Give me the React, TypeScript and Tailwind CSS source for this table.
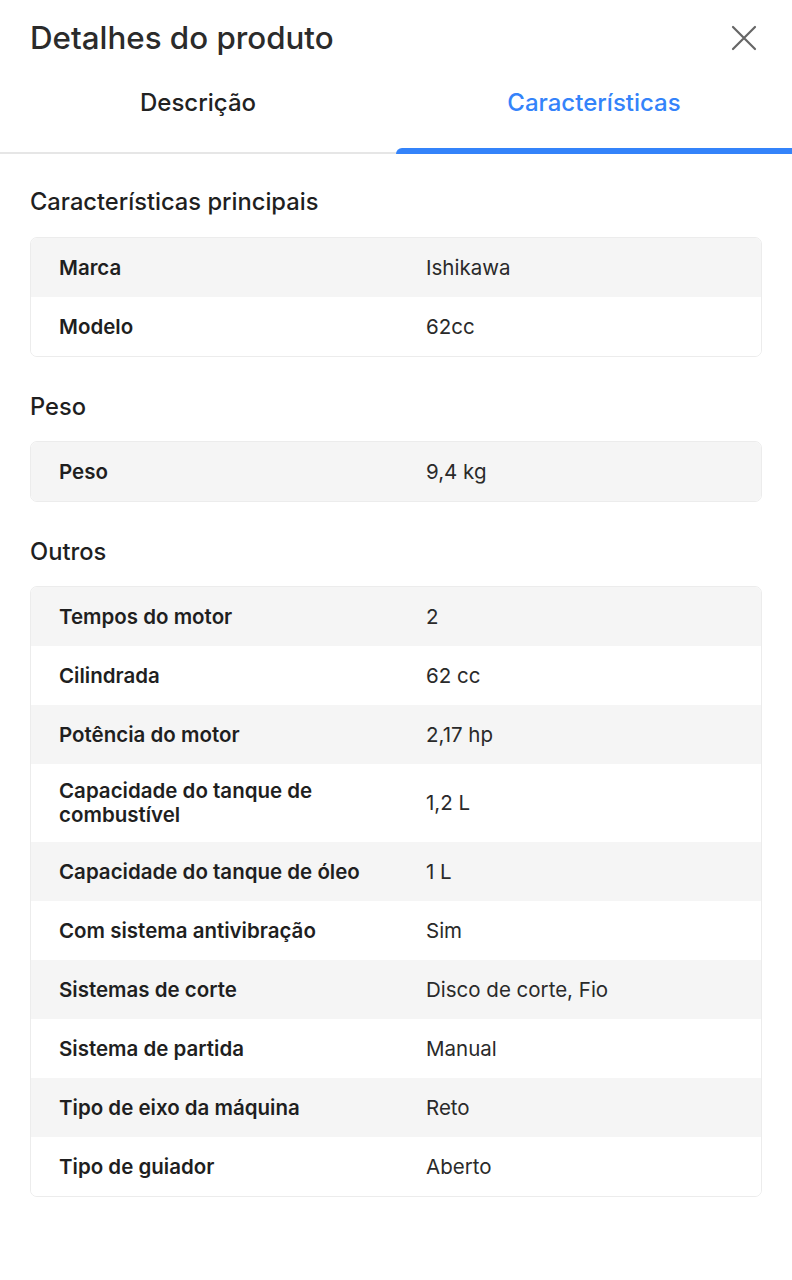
import React from "react";

type Row = [string, string];

const font = { fontFamily: '"Inter", "Open Sans", sans-serif' };

function Table({ rows }: { rows: Row[] }) {
  return (
    <div className="mx-[30px] rounded-[7px] border border-[#ececec] overflow-hidden">
      {rows.map(([k, v], i) => (
        <div
          key={k}
          className={`flex items-center min-h-[59px] py-[15px] ${i % 2 === 0 ? "bg-[#f5f5f5]" : "bg-white"}`}
        >
          <div className="w-[395px] pl-[28px] pr-[24px] text-[20.5px] leading-[24px] font-semibold text-[#1f1f1f]">{k}</div>
          <div className="flex-1 pr-[20px] text-[20.5px] leading-[24px] text-[#2a2a2a]">{v}</div>
        </div>
      ))}
    </div>
  );
}

function Heading({ children }: { children: React.ReactNode }) {
  return <h2 className="px-[30px] text-[23.7px] leading-[30px] text-[#1f1f1f] font-medium">{children}</h2>;
}

export default function App() {
  return (
    <div className="w-[792px] min-h-[1280px] bg-white" style={font}>
      <div className="flex items-center justify-between pl-[30px] pr-[34px] pt-[17px] h-[58px]">
        <h1 className="text-[31.3px] leading-[38px] text-[#2b2b2b] font-medium">Detalhes do produto</h1>
        <svg width="28" height="28" viewBox="0 0 28 28" className="mt-[1px]">
          <path d="M3 3 L25 25 M25 3 L3 25" stroke="#666" strokeWidth="2.2" fill="none" strokeLinecap="round" />
        </svg>
      </div>
      <div className="relative flex h-[96px] border-b-2 border-[#e6e6e6]">
        <div className="flex-1 flex items-center justify-center text-[24px] font-medium text-[#222] pb-[4px]">Descrição</div>
        <div className="flex-1 flex items-center justify-center text-[24px] font-medium text-[#3483fa] pb-[4px]">Características</div>
        <div className="absolute right-0 bottom-[-2px] w-[396px] h-[6px] bg-[#3483fa] rounded-tl-[6px]" />
      </div>
      <div className="pt-[33px]">
        <Heading>Características principais</Heading>
        <div className="h-[20px]" />
        <Table rows={[["Marca", "Ishikawa"], ["Modelo", "62cc"]]} />
        <div className="h-[35px]" />
        <Heading>Peso</Heading>
        <div className="h-[19px]" />
        <Table rows={[["Peso", "9,4 kg"]]} />
        <div className="h-[35px]" />
        <Heading>Outros</Heading>
        <div className="h-[19px]" />
        <Table
          rows={[
            ["Tempos do motor", "2"],
            ["Cilindrada", "62 cc"],
            ["Potência do motor", "2,17 hp"],
            ["Capacidade do tanque de combustível", "1,2 L"],
            ["Capacidade do tanque de óleo", "1 L"],
            ["Com sistema antivibração", "Sim"],
            ["Sistemas de corte", "Disco de corte, Fio"],
            ["Sistema de partida", "Manual"],
            ["Tipo de eixo da máquina", "Reto"],
            ["Tipo de guiador", "Aberto"],
          ]}
        />
      </div>
    </div>
  );
}
